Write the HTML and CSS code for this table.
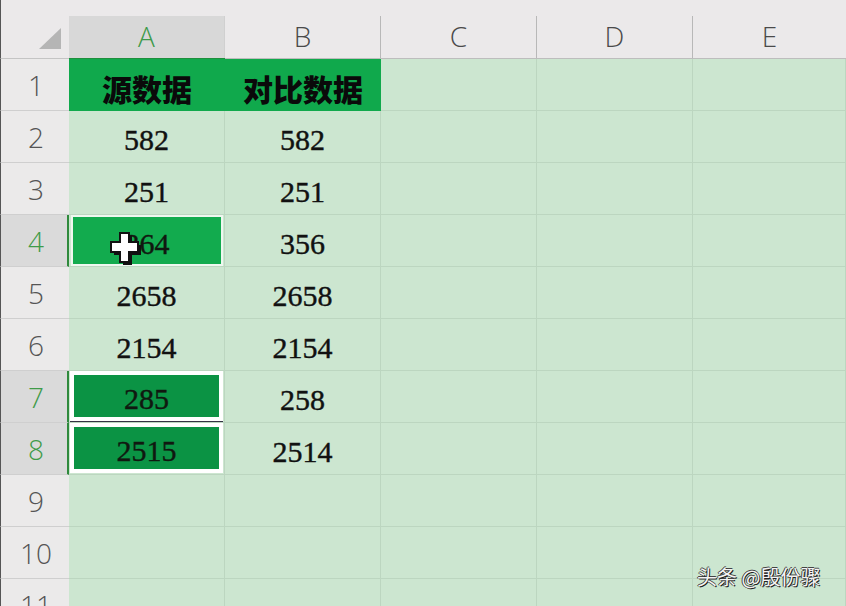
FILE: index.html
```html
<!DOCTYPE html>
<html lang="zh">
<head>
<meta charset="utf-8">
<link rel="stylesheet" href="styles.css">
</head>
<body>
<div class="sheet">
  <div class="corner"><span class="tri"></span></div>
  <div class="colh active"><span class="lbl">A</span></div>
  <div class="colh"><span class="lbl">B</span></div>
  <div class="colh"><span class="lbl">C</span></div>
  <div class="colh"><span class="lbl">D</span></div>
  <div class="colh last"><span class="lbl">E</span></div>

  <div class="rowh">1</div>
  <div class="cell head">源数据</div>
  <div class="cell head">对比数据</div>
  <div class="cell"></div><div class="cell"></div><div class="cell"></div>

  <div class="rowh">2</div>
  <div class="cell num">582</div><div class="cell num">582</div>
  <div class="cell"></div><div class="cell"></div><div class="cell"></div>

  <div class="rowh">3</div>
  <div class="cell num">251</div><div class="cell num">251</div>
  <div class="cell"></div><div class="cell"></div><div class="cell"></div>

  <div class="rowh sel">4</div>
  <div class="cell num"><div class="box light">364</div></div><div class="cell num">356</div>
  <div class="cell"></div><div class="cell"></div><div class="cell"></div>

  <div class="rowh">5</div>
  <div class="cell num">2658</div><div class="cell num">2658</div>
  <div class="cell"></div><div class="cell"></div><div class="cell"></div>

  <div class="rowh">6</div>
  <div class="cell num">2154</div><div class="cell num">2154</div>
  <div class="cell"></div><div class="cell"></div><div class="cell"></div>

  <div class="rowh sel">7</div>
  <div class="cell num"><div class="box dark top">285</div></div><div class="cell num">258</div>
  <div class="cell"></div><div class="cell"></div><div class="cell"></div>

  <div class="rowh sel">8</div>
  <div class="cell num"><div class="box dark">2515</div></div><div class="cell num">2514</div>
  <div class="cell"></div><div class="cell"></div><div class="cell"></div>

  <div class="rowh">9</div>
  <div class="cell"></div><div class="cell"></div><div class="cell"></div><div class="cell"></div><div class="cell"></div>

  <div class="rowh">10</div>
  <div class="cell"></div><div class="cell"></div><div class="cell"></div><div class="cell"></div><div class="cell"></div>

  <div class="rowh">11</div>
  <div class="cell"></div><div class="cell"></div><div class="cell"></div><div class="cell"></div><div class="cell"></div>
</div>

<svg class="cursor" width="32" height="34" viewBox="0 0 32 34">
  <path d="M11 2h9v9h9v10h-9v10h-9V21H2V11h9z" fill="#111" transform="translate(2 2)"/>
  <path d="M10 1h9v9h9v10h-9v10h-9V20H1V10h9z" fill="#fff" stroke="#111" stroke-width="2"/>
</svg>

<div class="watermark">头条 @殷份骤</div>
</body>
</html>
```

FILE: styles.css
```css
html, body {
  margin: 0;
  padding: 0;
  width: 846px;
  height: 606px;
  overflow: hidden;
  background: #cce6d0;
}

.sheet {
  display: grid;
  grid-template-columns: 69px 156px 156px 156px 156px 153px;
  grid-template-rows: 59px repeat(11, 52px);
}

.corner {
  background: #ebe9ea;
  border-left: 1px solid #555;
  border-bottom: 1px solid #c4c4c4;
  box-sizing: border-box;
  position: relative;
}
.corner .tri {
  position: absolute;
  left: 38px;
  top: 28px;
  width: 0;
  height: 0;
  border-left: 22px solid transparent;
  border-bottom: 21px solid #b5b5b5;
}

.colh {
  background: #ebe9ea;
  padding-top: 16px;
  box-sizing: border-box;
  display: flex;
  border-bottom: 1px solid #bdbdbd;
}
.colh .lbl {
  flex: 1;
  display: flex;
  align-items: center;
  justify-content: center;
  font-family: "Open Sans", "Noto Sans", sans-serif;
  font-weight: 300;
  font-size: 28px;
  color: #4a4a4a;
  border-right: 1px solid #b8b8b8;
  padding-bottom: 2px;
}
.colh.last .lbl { border-right: none; }
.colh.active .lbl {
  background: #d8d8d8;
  color: #3d9a4a;
  border-right-color: #d0d0d0;
}
.colh.active { border-bottom: 1px solid #1f8f3d; }

.rowh {
  background: #ebeaea;
  border-left: 1px solid #555;
  border-bottom: 1px solid #cfcfcf;
  box-sizing: border-box;
  display: flex;
  align-items: center;
  justify-content: center;
  font-family: "Open Sans", "Noto Sans", sans-serif;
  font-weight: 300;
  font-size: 28px;
  color: #555;
  padding-left: 2px;
}
.rowh.sel {
  background: #dadada;
  color: #3f9b48;
  border-right: 2px solid #2f8a3c;
  padding-left: 4px;
}

.cell {
  background: #cce6d0;
  border-right: 1px solid #bcd6c0;
  border-bottom: 1px solid #bcd6c0;
  box-sizing: border-box;
}

.cell.head {
  background: #10a94c;
  border-right: none;
  border-bottom: none;
  display: flex;
  align-items: center;
  justify-content: center;
  font-family: "Noto Sans CJK SC", sans-serif;
  font-weight: 900;
  font-size: 30px;
  color: #0a0a0a;
  padding-top: 5px;
}

.cell.num {
  display: flex;
  align-items: center;
  justify-content: center;
  font-family: "Liberation Serif", serif;
  font-size: 30px;
  color: #111;
  padding-top: 6px;
  -webkit-text-stroke: 0.4px currentColor;
}

.cell.num:has(.box) {
  padding: 0;
  align-items: stretch;
  justify-content: stretch;
}

.box {
  flex: 1;
  display: flex;
  align-items: center;
  justify-content: center;
  padding-top: 6px;
  box-sizing: border-box;
  color: #101810;
}
.box.light {
  background: #12ab4e;
  border: 2px solid #eef7ef;
  margin: 0 1px 0 2px;
}
.box.dark {
  background: #0b9344;
  border: 4px solid #ffffff;
  margin: 0 1px 1px 1px;
}
.box.top {
  box-shadow: 0 1px 0 #334;
}

.cursor {
  position: absolute;
  left: 110px;
  top: 232px;
}

.watermark {
  position: absolute;
  left: 697px;
  top: 562px;
  font-family: "Noto Sans CJK SC", sans-serif;
  font-size: 20px;
  color: #f4f4f4;
  text-shadow: 1px 1px 0 #222, -1px 0 0 #444, 0 -1px 0 #444;
}
```
